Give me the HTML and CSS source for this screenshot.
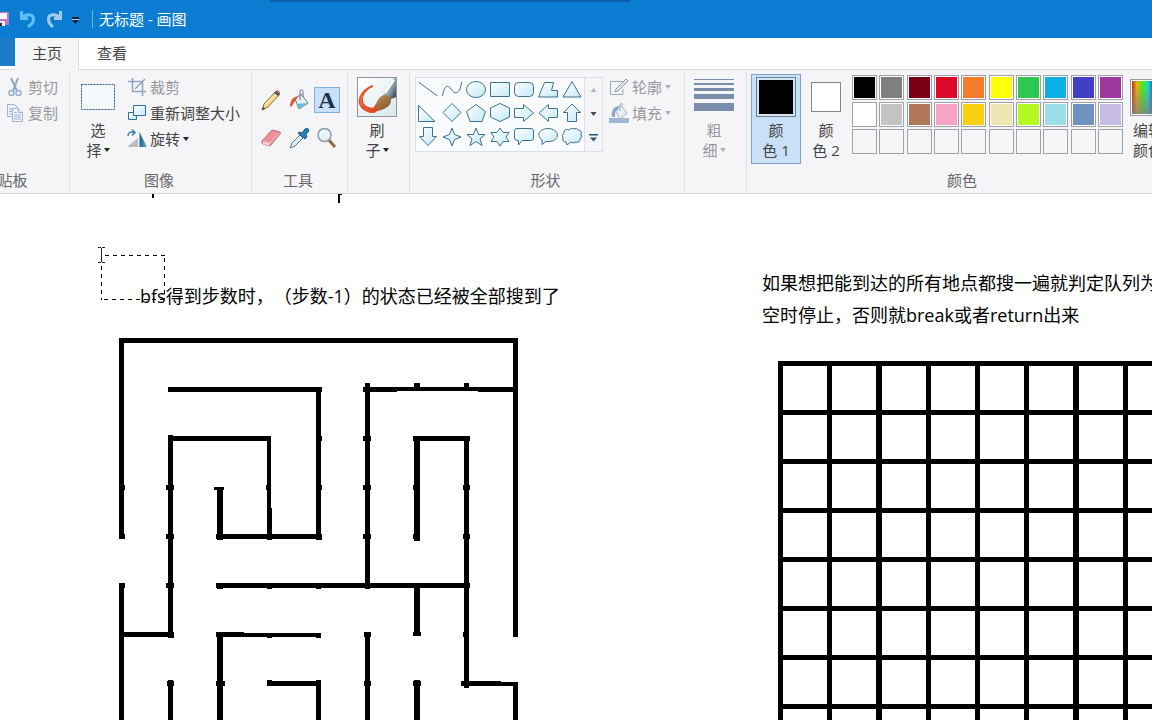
FILE: index.html
```html
<!DOCTYPE html>
<html lang="zh-CN">
<head>
<meta charset="utf-8">
<title>无标题 - 画图</title>
<link rel="stylesheet" href="styles.css">
</head>
<body>
<svg class="defs" width="0" height="0" aria-hidden="true">
  <defs>
    <linearGradient id="sf" x1="0" y1="0" x2="1" y2="1"><stop offset="0" stop-color="#fff"/><stop offset="1" stop-color="#c4e9f8"/></linearGradient>
    <linearGradient id="tri" x1="0" y1="0" x2="1" y2="0"><stop offset="0" stop-color="#1d5f8c"/><stop offset="1" stop-color="#6fb4d6"/></linearGradient>
    <linearGradient id="brown" x1="0" y1="0" x2="1" y2="1"><stop offset="0" stop-color="#c79a5c"/><stop offset="1" stop-color="#7a5226"/></linearGradient>
    <linearGradient id="metal" x1="0" y1="0" x2="1" y2="1"><stop offset="0" stop-color="#eef3f7"/><stop offset=".5" stop-color="#9aa9b8"/><stop offset="1" stop-color="#232d3b"/></linearGradient>
    <linearGradient id="paper" x1="0" y1="0" x2="1" y2="1"><stop offset="0" stop-color="#fff"/><stop offset="1" stop-color="#d5e8ea"/></linearGradient>
  </defs>
</svg>

<header class="titlebar">
  <svg class="save" width="9" height="18" viewBox="0 0 9 18" aria-hidden="true"><path d="M0 2h9v13H0z" fill="#c078c4"/><path d="M0 3h7v6H0z" fill="#fff"/><path d="M0 11h5v5H0z" fill="#f0e6f4"/><path d="M0 13h2v3H0z" fill="#333"/></svg>
  <button class="quick" aria-label="撤消"><svg width="18" height="20" viewBox="0 0 18 20"><path d="M2.500 2v7.500H9M3 9C6 5 14.500 4 14.500 10.500C14.500 15 11 16 9 18" fill="none" stroke="#5cc0f4" stroke-width="3"/></svg></button>
  <button class="quick redo" aria-label="重做"><svg width="18" height="20" viewBox="0 0 18 20"><path d="M15.500 2v7.500H9M15 9C12 5 3.500 4 3.500 10.500C3.500 15 6 16 8 18" fill="none" stroke="#a4cbee" stroke-width="3"/></svg></button>
  <button class="quick more" aria-label="自定义快速访问工具栏"><svg width="9" height="8" viewBox="0 0 9 8"><path d="M1 0h7v2H1zM1 3h7L4.500 7z" fill="#0b1f38"/><path d="M1 2h7v1H1z" fill="#b9dcf5"/></svg></button>
  <h1 class="title">无标题 - 画图</h1>
</header>

<nav class="tabs">
  <button class="tab file" aria-label="文件"></button>
  <button class="tab active">主页</button>
  <button class="tab">查看</button>
</nav>

<div class="ribbon">
  <section class="group clipboard">
    <div class="body">
      <div class="rows">
        <button class="row" disabled><svg width="20" height="20" viewBox="0 0 20 20"><path d="M6 1l6 13M13 1L8 14" stroke="#93a5bb" stroke-width="2" fill="none"/><circle cx="6.500" cy="16" r="2.500" fill="none" stroke="#8fb0d0" stroke-width="1.500"/><circle cx="13.500" cy="16" r="2.500" fill="none" stroke="#8fb0d0" stroke-width="1.500"/></svg>剪切</button>
        <button class="row" disabled><svg width="20" height="20" viewBox="0 0 20 20" fill="#eef4fb" stroke="#9db4d2"><path d="M2.500 1.500h7l3 3v9h-10z"/><path d="M4 6h4M4 8.500h4M4 11h4"/><path d="M7.500 5.500h6l4 4v9h-10z"/><path d="M13.500 5.500v4h4M9 9.500h3M9 12h7M9 14h7M9 16h7"/></svg>复制</button>
      </div>
    </div>
    <h2 class="caption">剪贴板</h2>
  </section>

  <section class="group image">
    <div class="body">
      <button class="big select"><span class="art"><svg width="36" height="28" viewBox="0 0 36 28"><rect x="1.500" y="1.500" width="33" height="25" fill="#f7fafd" stroke="#2f5f8c" stroke-dasharray="2 1"/></svg></span>选<br>择<i class="arrow"></i></button>
      <div class="rows">
        <button class="row" disabled><svg width="20" height="20" viewBox="0 0 20 20" fill="none" stroke="#93a5bb" stroke-width="1.500"><path d="M5.500 1v13.500H19M1 4.500h14.500V19M8 12L18 2"/></svg>裁剪</button>
        <button class="row"><svg width="20" height="20" viewBox="0 0 20 20" fill="url(#sf)" stroke="#2b6f9b"><path d="M1.500 9.500h8v7h-8z"/><path d="M6.500 2.500h12v10h-12z"/></svg>重新调整大小</button>
        <button class="row"><svg width="20" height="20" viewBox="0 0 20 20"><path d="M0 18h11V9z" fill="#b9bcc0"/><path d="M12.500 3v15H20z" fill="url(#tri)"/><path d="M1 7C1 3 4 2.500 7 3.500M5 .5l3 3-3 3" fill="none" stroke="#3b82b8" stroke-width="1.500"/></svg>旋转<i class="arrow"></i></button>
      </div>
    </div>
    <h2 class="caption">图像</h2>
  </section>

  <section class="group tools">
    <div class="body">
      <div class="toolgrid">
        <button class="tool" aria-label="铅笔"><svg width="24" height="24" viewBox="0 0 24 24"><path d="M3 22l2-6L17 3l4 3L9 19z" fill="#f3d98a" stroke="#8a713c"/><path d="M6 17L18 5" stroke="#fff3c0"/><path d="M17 3l4 3-2 2-4-3z" fill="#555b66"/><path d="M18 2l3 3" stroke="#c77" stroke-width="1.500"/><path d="M3 22l1-3 2 1.500z" fill="#333"/></svg></button>
        <button class="tool" aria-label="用颜色填充"><svg width="24" height="24" viewBox="0 0 24 24"><path d="M8 11l6-5 7 9-9 6z" fill="#e4f1f8" stroke="#5f8299"/><path d="M10 16l10-1-8 5.500z" fill="#6ab7dc"/><path d="M13 12V4c0-3 3-3 3 0v5" fill="none" stroke="#6a7684"/><path d="M11 8C6 9 3 12 3 19c4-1 3-5 6-7z" fill="#e35a31"/></svg></button>
        <button class="tool on" aria-label="文本">A</button>
        <button class="tool" aria-label="橡皮擦"><svg width="24" height="24" viewBox="0 0 24 24"><path d="M3 15L12 5q1-1 2-1l7 2q1 1 0 2L12 19q-1 1-2 1l-6-2q-2-1-1-3z" fill="#ef8f97" stroke="#c4727a"/><path d="M4 15l7 2-1 3-6-2z" fill="#f9cfd2"/><path d="M11 17l9-10" stroke="#f7c0c4"/></svg></button>
        <button class="tool" aria-label="颜色选取器"><svg width="24" height="24" viewBox="0 0 24 24"><path d="M3 22l2-5 8-8 3 3-8 8z" fill="#dfeaf2" stroke="#5e7589"/><path d="M11 7l2-1 2 1 3-4q3-2 4 1 0 2-3 4l1 3-2 2z" fill="#2b7fbd" stroke="#1d5a8b"/></svg></button>
        <button class="tool" aria-label="放大镜"><svg width="24" height="24" viewBox="0 0 24 24"><path d="M13 13l7 8" stroke="#8d6a44" stroke-width="3"/><circle cx="9.500" cy="9" r="6.500" fill="#e4f2fb" stroke="#8d99a6" stroke-width="1.500"/><path d="M5.500 9q0-4 4-4" fill="none" stroke="#fff" stroke-width="1.500"/></svg></button>
      </div>
    </div>
    <h2 class="caption">工具</h2>
  </section>

  <section class="group brushes">
    <div class="body">
      <button class="big"><span class="art"><svg width="40" height="40" viewBox="0 0 40 40"><rect x=".5" y=".5" width="39" height="39" fill="url(#paper)" stroke="#8e9499"/><path d="M27 17L37 1h2v19l-7 3z" fill="url(#metal)"/><path d="M28 16L37 3" stroke="#fff" stroke-width="2"/><path d="M16 8C8 10 0 19 2 27c2 6 8 9 16 9l1-5C11 31 5 28 6 21c1-5 5-9 10-11z" fill="#e4532f"/><path d="M8 16C4 20 3 24 5 29" fill="none" stroke="#f28a66"/><path d="M12 34c6-2 6-6 9-11 3-5 8-7 12-3 3 5-1 10-6 12-5 2-10 3-15 2z" fill="url(#brown)"/><path d="M10 35c4-2 7-4 9-8 1 4 2 6 0 8-3 1-6 1-9 0z" fill="#e8451f"/></svg></span>刷<br>子<i class="arrow"></i></button>
    </div>
  </section>

  <section class="group shapes">
    <div class="body">
      <div class="gallery">
        <div class="shapegrid">
          <button aria-label="直线"><svg viewBox="0 0 24 24"><path d="M2.500 4l19 14"/></svg></button>
          <button aria-label="曲线"><svg viewBox="0 0 24 24"><path class="open" d="M2.500 18C4 8 8 6 11 11s9 7 10.500-7"/></svg></button>
          <button aria-label="椭圆形"><svg viewBox="0 0 24 24"><ellipse cx="12" cy="11.500" rx="9.500" ry="8"/></svg></button>
          <button aria-label="矩形"><svg viewBox="0 0 24 24"><path d="M2.500 4.500h19v14h-19z"/></svg></button>
          <button aria-label="圆角矩形"><svg viewBox="0 0 24 24"><rect x="2.500" y="4.500" width="19" height="14" rx="4"/></svg></button>
          <button aria-label="多边形"><svg viewBox="0 0 24 24"><path d="M8.500 4.500h9l-2 8h6v6.500h-19z"/></svg></button>
          <button aria-label="三角形"><svg viewBox="0 0 24 24"><path d="M12 3.500l9 15.500H3z"/></svg></button>
          <button aria-label="直角三角形"><svg viewBox="0 0 24 24"><path d="M2.500 3.500v16H19z"/></svg></button>
          <button aria-label="菱形"><svg viewBox="0 0 24 24"><path d="M12 1.500l9 9-9 9-9-9z"/></svg></button>
          <button aria-label="五边形"><svg viewBox="0 0 24 24"><path d="M12 2.500l9.500 7-3.500 10H6l-3.500-10z"/></svg></button>
          <button aria-label="六边形"><svg viewBox="0 0 24 24"><path d="M12 1.500l9.500 4.500v9L12 19.500 2.500 15V6z"/></svg></button>
          <button aria-label="右箭头"><svg viewBox="0 0 24 24"><path d="M2.500 6.500h9v-4l10 8.500-10 8.500v-4h-9z"/></svg></button>
          <button aria-label="左箭头"><svg viewBox="0 0 24 24"><path d="M21.500 6.500h-9v-4L3 11l9.500 8.500v-4h9z"/></svg></button>
          <button aria-label="向上箭头"><svg viewBox="0 0 24 24"><path d="M7.500 19.500v-9h-4L12 2l8.500 8.500h-4v9z"/></svg></button>
          <button aria-label="向下箭头"><svg viewBox="0 0 24 24"><path d="M7.500 1.500v9h-4L12 19.500l8.500-9h-4v-9z"/></svg></button>
          <button aria-label="四角星形"><svg viewBox="0 0 24 24"><path d="M12 2l2.500 6.500L21 11l-6.500 2.500L12 20l-2.500-6.500L3 11l6.500-2.500z"/></svg></button>
          <button aria-label="五角星形"><svg viewBox="0 0 24 24"><path d="M12 2l2.500 6.500H21l-5 4.500 2 6.500-6-4-6 4L8 13 3 8.500h6.500z"/></svg></button>
          <button aria-label="六角星形"><svg viewBox="0 0 24 24"><path d="M12 2l3 4.500h6L18 11l3 4.500h-6L12 20l-3-4.500H3L6 11 3 6.500h6z"/></svg></button>
          <button aria-label="圆角矩形标注"><svg viewBox="0 0 24 24"><path d="M5 2.500h14q2.500 0 2.500 2.500v7q0 2.500-2.500 2.500h-9L6.500 19v-4.500H5q-2.500 0-2.500-2.500V5q0-2.500 2.500-2.500z"/></svg></button>
          <button aria-label="椭圆形标注"><svg viewBox="0 0 24 24"><path d="M6 18.500v-4.500C-1 8 5 2.500 12 2.500c12 0 13 13 0 13h-2z"/></svg></button>
          <button aria-label="云形标注"><svg viewBox="0 0 24 24"><path d="M6 16q-4 0-3-4-2-2 1-5 0-5 5-3 2-3 5-1 3-2 4 1 4 0 3 4 2 3-1 5 0 4-4 3-3 2-5 0l-4 3z"/></svg></button>
        </div>
        <div class="scroller">
          <button aria-label="向上滚动" disabled><svg width="9" height="8" viewBox="0 0 9 8"><path d="M1.500 6h6l-3-4z" fill="#b4b4b8"/></svg></button>
          <button aria-label="向下滚动"><svg width="9" height="8" viewBox="0 0 9 8"><path d="M1.500 2h6l-3 4z" fill="#38485c"/></svg></button>
          <button aria-label="更多形状"><svg width="9" height="8" viewBox="0 0 9 8"><path d="M0 0h9v1.500H0zM1 3.500h7l-3.500 4z" fill="#2d5373"/></svg></button>
        </div>
      </div>
      <div class="rows">
        <button class="row" disabled><svg width="20" height="20" viewBox="0 0 20 20"><path d="M14 4.500H1.500v13H14V12" fill="none" stroke="#9aa9b8"/><path d="M6 15l1-3L17 2l2 2L9 14z" fill="#dfe7ef" stroke="#8c9cae"/></svg>轮廓<i class="arrow"></i></button>
        <button class="row" disabled><svg width="20" height="20" viewBox="0 0 20 20"><path d="M0 15h20v5H0z" fill="#a3b6d2"/><path d="M6 7l6-5 6 8-7 6z" fill="#e7eef6" stroke="#a5b5c8"/><path d="M11 8V2c0-2 3-2 3 0" fill="none" stroke="#98a8bb"/><path d="M10 3C4 4 2 8 3 14h3c0-4 0-6 3-7z" fill="#8fa6c4"/></svg>填充<i class="arrow"></i></button>
      </div>
    </div>
    <h2 class="caption">形状</h2>
  </section>

  <section class="group size">
    <div class="body">
      <button class="big" disabled><span class="art"><svg width="40" height="40" viewBox="0 0 40 40" fill="#7a8dab"><path d="M0 2h40v1H0zM0 6h40v2H0zM0 11h40v3H0zM0 17h40v5H0zM0 26h40v8H0z"/></svg></span>粗<br>细<i class="arrow"></i></button>
    </div>
  </section>

  <section class="group colors">
    <div class="body">
      <button class="big on"><span class="art"><span class="chip first"></span></span>颜<br>色 1</button>
      <button class="big"><span class="art"><span class="chip"></span></span>颜<br>色 2</button>
      <div class="palette">
        <button class="sw black" aria-label="黑色"></button><button class="sw gray" aria-label="灰色-50%"></button><button class="sw maroon" aria-label="深红色"></button><button class="sw red" aria-label="红色"></button><button class="sw orange" aria-label="橙色"></button><button class="sw yellow" aria-label="黄色"></button><button class="sw green" aria-label="绿色"></button><button class="sw turquoise" aria-label="青绿"></button><button class="sw indigo" aria-label="靛蓝"></button><button class="sw purple" aria-label="紫色"></button>
        <button class="sw white" aria-label="白色"></button><button class="sw silver" aria-label="灰色-25%"></button><button class="sw brown" aria-label="褐色"></button><button class="sw rose" aria-label="玫瑰色"></button><button class="sw gold" aria-label="金色"></button><button class="sw tan" aria-label="浅黄色"></button><button class="sw lime" aria-label="酸橙色"></button><button class="sw aqua" aria-label="淡青绿色"></button><button class="sw steel" aria-label="蓝灰色"></button><button class="sw lavender" aria-label="淡紫色"></button>
        <button class="sw" aria-label="自定义 1"></button><button class="sw" aria-label="自定义 2"></button><button class="sw" aria-label="自定义 3"></button><button class="sw" aria-label="自定义 4"></button><button class="sw" aria-label="自定义 5"></button><button class="sw" aria-label="自定义 6"></button><button class="sw" aria-label="自定义 7"></button><button class="sw" aria-label="自定义 8"></button><button class="sw" aria-label="自定义 9"></button><button class="sw" aria-label="自定义 10"></button>
      </div>
      <button class="big edit"><span class="art"><span class="rainbow"></span></span>编辑<br>颜色</button>
    </div>
    <h2 class="caption">颜色</h2>
  </section>
</div>

<main class="canvas">
  <svg class="drawing" width="100%" height="100%" aria-hidden="true">
    <g transform="translate(0 -194)" shape-rendering="crispEdges">
      <path d="M152 194h2v4h-2zM338 194h2v9h-2zM340 194h2v1h-2z"/>
      <!-- maze walls -->
      <path d="M119 338h399v5H119zM119 338h5v201h-5zM119 485h6v5h-6zM119 534h6v5h-6z
        M168 387h154v5H168zM316 387h5v152h-5zM316 436h6v5h-6zM316 485h6v5h-6zM316 534h6v6h-6z
        M168 435h5v203h-5zM166 485h8v5h-8zM166 534h8v5h-8zM166 583h8v5h-8zM168 632h6v6h-6z
        M168 436h103v5H168zM267 436h4v72h-4zM267 508h5v32h-5zM266 485h5v5h-5z
        M214 487h10v3h-10zM217 487h6v53h-6zM216 534h106v5H216z
        M119 583h6v5h-6zM119 583h5v400h-5zM119 632h55v5h-55z
        M216 583h254v5H216zM217 583h6v6h-6zM267 583h5v6h-5zM316 583h5v6h-5z
        M216 632h28v5h-28zM216 633h105v4H216zM267 633h5v5h-5zM316 633h5v5h-5zM217 632h6v351h-6zM216 681h9v5h-9z
        M168 680h5v303h-5zM167 681h7v5h-7zM267 681h54v5h-54zM267 680h5v6h-5zM316 680h5v303h-5z
        M513 338h5v299h-5zM365 383h5v206h-5zM363 387h8v5h-8zM363 436h8v5h-8zM363 485h8v5h-8zM363 534h8v5h-8z
        M365 387h32v5h-32zM397 387h81v4h-81zM478 387h40v5h-40zM414 383h6v5h-6zM464 383h5v5h-5z
        M413 436h57v5h-57zM414 436h6v105h-6zM413 485h6v5h-6zM413 534h7v5h-7z
        M464 436h5v252h-5zM463 485h7v5h-7zM463 534h7v5h-7zM464 583h6v5h-6zM463 632h5v5h-5zM461 681h8v5h-8z
        M414 583h6v53h-6zM413 632h8v4h-8zM365 632h5v351h-5zM364 632h7v5h-7zM364 681h7v5h-7z
        M414 680h6v303h-6zM413 681h8v5h-8zM464 681h37v5h-37zM501 682h17v4h-17zM513 682h5v301h-5z"/>
      <!-- empty board -->
      <path d="M778 361h444v5H778zM778 410h444v5H778zM778 459h444v5H778zM778 508h444v5H778zM778 557h444v5H778zM778 606h444v5H778zM778 655h444v5H778zM778 704h444v5H778zM778 753h444v5H778zM778 802h444v5H778z
        M778 361h5v446h-5zM827 361h5v446h-5zM876 361h6v446h-6zM926 361h5v446h-5zM975 361h5v446h-5zM1024 361h5v446h-5zM1073 361h6v446h-6zM1123 361h5v446h-5zM1172 361h5v446h-5z"/>
      <!-- text box outline and I-beam pointer -->
      <path d="M105 255.500H165M164.500 258v41M101.500 266v34M104 299.500h61" fill="none" stroke="#000" stroke-dasharray="4 4"/>
      <path d="M98 247.500h3M102 247.500h3M101.500 248v14M98 262.500h3M102 262.500h3" fill="none" stroke="#222"/>
    </g>
  </svg>
  <p class="note left">bfs得到步数时，（步数-1）的状态已经被全部搜到了</p>
  <p class="note right">如果想把能到达的所有地点都搜一遍就判定队列为<br>空时停止，否则就break或者return出来</p>
</main>
</body>
</html>
```
FILE: styles.css
```css
* { box-sizing: border-box; }

body {
  margin: 0;
  height: 100vh;
  display: flex;
  flex-direction: column;
  overflow: hidden;
  background: #fff;
  color: #444;
  font: 400 15px/20px "Open Sans", "Noto Sans CJK SC", sans-serif;
}

button {
  margin: 0;
  padding: 0;
  border: 0;
  background: none;
  color: inherit;
  font: inherit;
}

button:disabled { color: #98989c; }

h1, h2, p { margin: 0; font-size: 15px; font-weight: 400; }

svg { display: block; }

.defs { position: absolute; }

/* Title bar */
.titlebar {
  flex: none;
  display: flex;
  align-items: center;
  height: 38px;
  background: linear-gradient(#0a5fa8, #0a5fa8) 270px 0 / 360px 2px no-repeat, #0a7dd3;
  color: #fff;
}

.save { margin-right: 10px; }
.quick { margin-right: 8px; }

.quick.more {
  margin-right: 12px;
  padding-top: 4px;
}

.title {
  padding-left: 6px;
  border-left: 1px solid #6fb4e8;
  line-height: 18px;
}

/* Tabs */
.tabs {
  flex: none;
  display: flex;
  height: 32px;
  border-bottom: 1px solid #dadbdc;
}

.tab { padding: 0 18px 2px; }

.tab.file {
  width: 15px;
  height: 28px;
  padding: 0;
  background: #1b7cc8;
}

.tab.active {
  margin-bottom: -1px;
  padding: 0 16px 2px 17px;
  border-right: 1px solid #dadbdc;
  background: #f5f5f8;
}

/* Ribbon */
.ribbon {
  flex: none;
  display: flex;
  margin-left: -55px;
  border-bottom: 1px solid #d4d5d8;
  background: #f5f5f8;
}

.group {
  flex: none;
  display: flex;
  flex-direction: column;
  padding: 4px 0 3px;
  background: linear-gradient(#dfe0e4, #dfe0e4) right 2px / 1px 120px no-repeat;
}

.body {
  display: flex;
  align-items: flex-start;
  height: 96px;
}

.caption {
  padding-right: 4px;
  color: #66666a;
  line-height: 20px;
  text-align: center;
}

.rows { display: flex; flex-direction: column; }

.row {
  display: flex;
  align-items: center;
  gap: 3px;
  height: 26px;
  white-space: nowrap;
}

.arrow {
  display: inline-block;
  margin-left: 2px;
  border: 3px solid transparent;
  border-top: 4px solid #222;
  border-bottom: 0;
  vertical-align: 4px;
}

.row .arrow { margin-left: 0; }

button:disabled .arrow { border-top-color: #b0b0b5; }

.big {
  width: 50px;
  height: 90px;
  padding: 2px 0 3px;
  border: 1px solid transparent;
  text-align: center;
  line-height: 20px;
}

.big.on {
  border-color: #7da2ce;
  background: #c9e0f7;
}

.art {
  display: flex;
  align-items: center;
  justify-content: center;
  height: 40px;
  margin-bottom: 3px;
}

.clipboard { width: 125px; }
.clipboard .body { padding-left: 60px; }
.clipboard .caption { padding-right: 5px; }

.image { width: 182px; }
.image .body { padding-left: 3px; gap: 4px; }

.tools { width: 96px; }
.tools .body { padding-left: 6px; }

.toolgrid {
  display: grid;
  grid-template-columns: repeat(3, 26px);
  grid-auto-rows: 26px;
  gap: 12px 2px;
  padding-top: 13px;
}

.tool {
  display: flex;
  align-items: center;
  justify-content: center;
}

.tool.on {
  border: 1px solid #7fb0dc;
  background: #c9e0f7;
  color: #1c2f4d;
  font: bold 24px/24px "Liberation Serif", serif;
}

.brushes, .size { width: 62px; }
.brushes .body { padding-left: 4px; }
.size .body { padding-left: 4px; }

.shapes { width: 275px; }
.shapes .body { padding: 0 0 0 5px; gap: 6px; }

.gallery {
  display: flex;
  height: 75px;
  margin-top: 3px;
  border: 1px solid #dcdfe6;
  background: #fafbfd;
}

.shapegrid {
  display: grid;
  grid-template-columns: repeat(7, 24px);
  grid-auto-rows: 24px;
}

.shapegrid svg {
  width: 24px;
  height: 24px;
  fill: url(#sf);
  stroke: #3f7290;
  stroke-width: 1;
}

.shapegrid .open { fill: none; }

.scroller {
  display: grid;
  grid-template-rows: repeat(3, 24px);
  width: 18px;
  border-left: 1px solid #dcdfe6;
  background: #f5f5f8;
}

.scroller button {
  display: flex;
  align-items: center;
  justify-content: center;
}

.colors { width: 430px; background: none; }
.colors .body { padding-left: 4px; }
.colors .caption { padding-right: 0; }

.chip {
  width: 30px;
  height: 30px;
  border: 1px solid #84868a;
  background: #fff;
}

.chip.first {
  width: 40px;
  height: 40px;
  border-color: #6d7f92;
  background: #000;
  box-shadow: inset 0 0 0 2px #d5e4f2;
}

.palette {
  display: grid;
  grid-template-columns: repeat(10, 25px);
  grid-auto-rows: 25px;
  justify-content: space-between;
  row-gap: 2px;
  width: 271px;
  margin: 1px 0 0 1px;
}

.sw {
  padding: 1px;
  border: 1px solid #a0a0a6;
  background-clip: content-box;
}

.sw:nth-child(-n+20) { box-shadow: inset 0 0 0 1px #fff; }

.black { background-color: #000; }
.gray { background-color: #7f7f7f; }
.maroon { background-color: #7a0016; }
.red { background-color: #dc0828; }
.orange { background-color: #f47a2c; }
.yellow { background-color: #ffff08; }
.green { background-color: #2ec850; }
.turquoise { background-color: #0eaee6; }
.indigo { background-color: #403fc6; }
.purple { background-color: #9b38a0; }
.white { background-color: #fff; }
.silver { background-color: #c3c3c3; }
.brown { background-color: #b27659; }
.rose { background-color: #f8a2c8; }
.gold { background-color: #f8cf14; }
.tan { background-color: #ece6b0; }
.lime { background-color: #b4f824; }
.aqua { background-color: #9cdfea; }
.steel { background-color: #7092be; }
.lavender { background-color: #c6bce4; }

.rainbow {
  width: 36px;
  height: 37px;
  padding: 1px;
  border: 1px solid #9a9ca0;
  box-shadow: inset 0 0 0 1px #fff;
  background:
    linear-gradient(transparent 10%, #808080cc) content-box,
    linear-gradient(90deg, #c83010, #f0b010 15%, #50e810 32%, #18e0c0 50%, #2050e8 66%, #d020c0 84%, #e02020) content-box;
}

/* Canvas */
.canvas {
  position: relative;
  flex: 1;
  overflow: hidden;
  background: #fff;
}

.drawing { position: absolute; inset: 0; }

.note {
  position: absolute;
  color: #000;
  font-size: 18px;
  line-height: 32px;
  text-spacing-trim: space-all;
  white-space: nowrap;
}

.note.left { left: 140px; top: 86px; }
.note.right { left: 762px; top: 73px; }
```
